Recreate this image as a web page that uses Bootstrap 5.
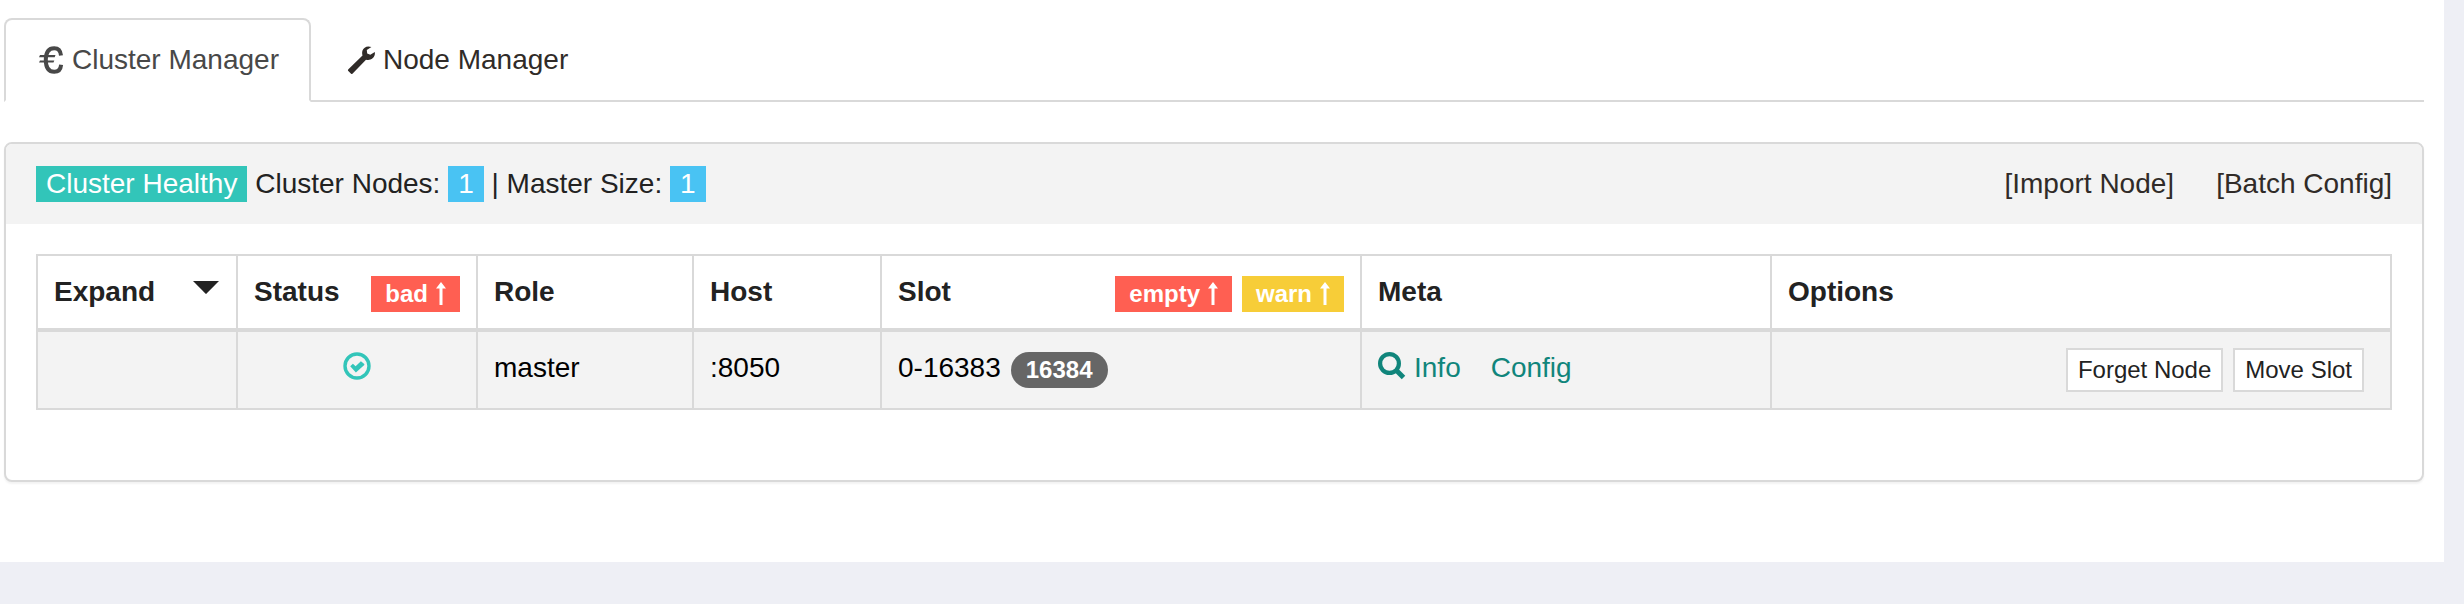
<!DOCTYPE html>
<html lang="en">
<head>
<meta charset="utf-8">
<meta name="viewport" content="width=device-width, initial-scale=1">
<title>Cluster Manager</title>
<link href="https://cdn.jsdelivr.net/npm/bootstrap@5.3.0/dist/css/bootstrap.min.css" rel="stylesheet">
<style>
  :root { --line: #d9d9d9; --ink: #222; --shade: #f3f3f3; }
  body { background: #eeeff5; color: var(--ink); font: 28px/40px "Liberation Sans", Arial, sans-serif; }
  .page { background: #fff; margin-right: 20px; padding: 18px 20px 80px 4px; }
  a { text-decoration: none; }
  svg { display: block; flex: none; fill: currentColor; }

  .nav-tabs { border-bottom: 2px solid var(--line); gap: 4px; }
  .nav-tabs .nav-link { display: flex; align-items: center; gap: 8px; padding: 20px 30px; margin-bottom: -2px;
    border: 2px solid transparent; border-radius: 8px 8px 0 0; color: #302b28; }
  .nav-tabs .nav-link.active { color: #484848; border-color: var(--line) var(--line) #fff; }

  .panel { margin-top: 40px; border: 2px solid var(--line); border-radius: 8px; box-shadow: 0 2px 2px rgba(0,0,0,.05); }
  .panel > .card-header { background: var(--shade); border: 0; padding: 20px 30px; border-radius: 6px 6px 0 0; }
  .panel > .card-body { padding: 30px 30px 70px; }
  .panel-links { gap: 42px; }
  .panel-links a { color: #302b28; }
  .tag { display: inline-block; line-height: 36px; padding: 0 10px; color: #fff; }
  .tag-ok { background: #32c5b9; }
  .tag-count { background: #49c3f3; }

  .nodes { table-layout: fixed; margin: 0; color: #000; border-color: var(--line); border-collapse: collapse; }
  .nodes > :not(caption) > * { border-width: 0; }
  .nodes > :not(caption) > * > * { padding: 16px; border: 2px solid var(--line); background: transparent; }
  .nodes > thead > tr > th { color: var(--ink); border-bottom-width: 4px; }
  .nodes > tbody > tr > td { background: var(--shade); }
  .nodes > tbody { border-top: 0; }
  .w-expand { width: 200px; } .w-status { width: 240px; } .w-role { width: 216px; } .w-host { width: 188px; }
  .w-slot { width: 480px; } .w-meta { width: 410px; }
  .sort { display: flex; align-items: center; gap: 8px; border: 0; padding: 0 14px; height: 36px;
    font-size: 24px; line-height: 36px; font-weight: 700; color: #fff; }
  .sort-bad { background: #ff5f52; }
  .sort-warn { background: #f7cd38; }
  .toggle { border: 0; padding: 0; background: none; color: var(--ink); }
  .count-pill { background: #666; color: #fff; font-size: 24px; line-height: 36px; font-weight: 700; padding: 0 15px; border-radius: 18px; }
  .meta-links { gap: 30px; }
  .meta-links a { color: #10857b; gap: 8px; }
  .gap-tag { gap: 10px; }
  .status-ok { color: #32c5b9; }
  .btn-node { font-size: 24px; line-height: 40px; padding: 0 10px; border: 2px solid var(--line); border-radius: 0; background: #fff; color: var(--ink); }
  .row-actions { gap: 10px; padding-right: 10px; }
</style>
</head>
<body>
<main class="page">
  <ul class="nav nav-tabs">
    <li class="nav-item">
      <a class="nav-link active" href="#cluster" aria-current="page">
        <svg width="28" height="28" viewBox="0 0 28 28" aria-hidden="true"><path d="M25 9.500C24.600 4.800 22.400 2.200 18.200 2.200 12.600 2.200 9.800 6.600 9.800 14s2.800 11.800 8.400 11.800c4.200 0 6.500-2.600 6.900-7.100" fill="none" stroke="currentColor" stroke-width="4"/><path d="M4 9h15.500l-.8 2.200H3zM4 14.400h14.300l-.8 2.200H3z"/></svg>
        Cluster Manager
      </a>
    </li>
    <li class="nav-item">
      <a class="nav-link" href="#node">
        <svg width="28" height="28" viewBox="0 0 28 28" aria-hidden="true"><path d="M24.400 1.100C20.500-.6 16.600 1.200 15.500 4.600c-.6 1.900-.4 3.300 0 4.900L1.400 23.200c-.6.600-.6 1.200-.1 1.800l2.500 2.600c.6.600 1.300.600 1.900 0L19 13.700c2.300.7 4.800.2 6.600-1.400 1.900-1.700 2.600-4 2.200-6.400l-4.500 2.900-3.100-1.200-.4-3.500z"/></svg>
        Node Manager
      </a>
    </li>
  </ul>

  <section class="card panel">
    <div class="card-header d-flex justify-content-between">
      <div><span class="tag tag-ok">Cluster Healthy</span> Cluster Nodes: <span class="tag tag-count">1</span> | Master Size: <span class="tag tag-count">1</span></div>
      <div class="d-flex panel-links"><a href="#import">[Import Node]</a><a href="#batch">[Batch Config]</a></div>
    </div>
    <div class="card-body">
      <table class="table table-bordered nodes">
        <colgroup><col class="w-expand"><col class="w-status"><col class="w-role"><col class="w-host"><col class="w-slot"><col class="w-meta"><col></colgroup>
        <thead>
          <tr>
            <th scope="col"><div class="d-flex justify-content-between">Expand
              <button type="button" class="toggle" aria-label="Expand all"><svg width="28" height="28" viewBox="0 0 28 28" aria-hidden="true"><path d="M1 3h26L14.600 15.600q-.6.600-1.200 0z"/></svg></button></div></th>
            <th scope="col"><div class="d-flex justify-content-between align-items-end">Status
              <button type="button" class="sort sort-bad">bad<svg width="10" height="24" viewBox="0 0 10 24" aria-hidden="true"><path d="M5 0l5 6.500H6.500V23h-3V6.500H0z"/></svg></button></div></th>
            <th scope="col">Role</th>
            <th scope="col">Host</th>
            <th scope="col"><div class="d-flex align-items-end gap-tag"><span class="me-auto">Slot</span>
              <button type="button" class="sort sort-bad">empty<svg width="10" height="24" viewBox="0 0 10 24" aria-hidden="true"><path d="M5 0l5 6.500H6.500V23h-3V6.500H0z"/></svg></button>
              <button type="button" class="sort sort-warn">warn<svg width="10" height="24" viewBox="0 0 10 24" aria-hidden="true"><path d="M5 0l5 6.500H6.500V23h-3V6.500H0z"/></svg></button></div></th>
            <th scope="col">Meta</th>
            <th scope="col">Options</th>
          </tr>
        </thead>
        <tbody>
          <tr>
            <td></td>
            <td><div class="d-flex justify-content-center status-ok"><svg width="28" height="36" viewBox="0 0 28 36" role="img" aria-label="Healthy"><circle cx="14" cy="18" r="12" fill="none" stroke="currentColor" stroke-width="3.400"/><path d="M7.200 18.300l2.700-2.600 2.700 2.500 5.300-5 3.400 2.700v1L12.900 24.500z"/></svg></div></td>
            <td>master</td>
            <td>:8050</td>
            <td><div class="d-flex align-items-end gap-tag">0-16383<span class="count-pill">16384</span></div></td>
            <td><div class="d-flex meta-links">
              <a class="d-flex" href="#info"><svg width="28" height="36" viewBox="0 0 28 36" aria-hidden="true"><circle cx="11.500" cy="15.500" r="9.400" fill="none" stroke="currentColor" stroke-width="4.200"/><path d="M18 22l7.500 7.500" fill="none" stroke="currentColor" stroke-width="5"/></svg>Info</a>
              <a href="#config">Config</a></div></td>
            <td><div class="d-flex justify-content-end row-actions">
              <button type="button" class="btn btn-node">Forget Node</button>
              <button type="button" class="btn btn-node">Move Slot</button></div></td>
          </tr>
        </tbody>
      </table>
    </div>
  </section>
</main>
<script src="https://cdn.jsdelivr.net/npm/bootstrap@5.3.0/dist/js/bootstrap.bundle.min.js"></script>
</body>
</html>
